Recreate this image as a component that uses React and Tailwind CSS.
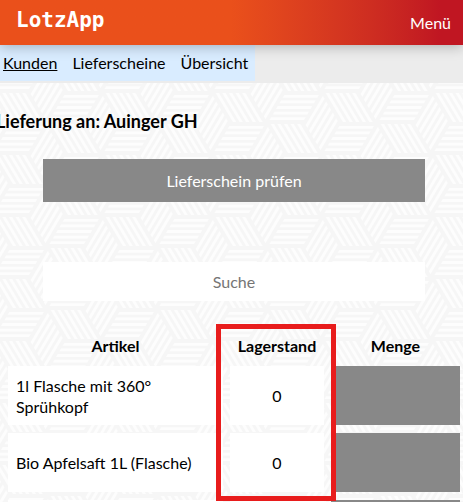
import React, { useState } from "react";

const articles = [
  { id: 1, name: "1l Flasche mit 360° Sprühkopf", stock: 0 },
  { id: 2, name: "Bio Apfelsaft 1L (Flasche)", stock: 0 },
  { id: 3, name: "", stock: "" },
];

const navLinks = [
  { label: "Kunden", active: true },
  { label: "Lieferscheine", active: false },
  { label: "Übersicht", active: false },
];

// The weave is made of hexagons, each split into three striped rhombi
const SIDES = [
  [36.67, 0],
  [-18.33, 31],
  [-18.33, -31],
];
const STRIPES = [0.14, 0.32, 0.5, 0.68, 0.86];

const hexagon = (cx, cy) =>
  SIDES.map(([ux, uy], i) => {
    const [vx, vy] = SIDES[(i + 1) % 3];
    const point = (a, b) =>
      `${(cx + ux * a + vx * b).toFixed(2)} ${(cy + uy * a + vy * b).toFixed(2)}`;
    return STRIPES.map(
      (t) =>
        `M${point(0.03, t - 0.045)}L${point(0.97, t - 0.045)}L${point(0.97, t + 0.045)}L${point(0.03, t + 0.045)}Z`
    ).join("");
  }).join("");

const CENTERS = [[0, 0], [110, 0], [0, 62], [110, 62], [55, 31]];

const Backdrop = () => (
  <svg className="absolute inset-0 -z-10 h-full w-full" aria-hidden="true">
    <defs>
      <pattern
        id="weave"
        width="110"
        height="62"
        patternUnits="userSpaceOnUse"
        patternTransform="translate(65 216)"
      >
        <path d={CENTERS.map(([x, y]) => hexagon(x, y)).join("")} fill="#fdfdfd" />
      </pattern>
    </defs>
    <rect width="100%" height="100%" fill="#f6f6f6" />
    <rect width="100%" height="100%" fill="url(#weave)" />
  </svg>
);

const App = () => {
  const [search, setSearch] = useState("");

  return (
    <div className="relative isolate h-screen overflow-hidden font-['Lato',sans-serif] text-base text-black">
      <Backdrop />

      <header className="relative flex h-[45px] items-center justify-between bg-linear-to-r from-[#ea501b] from-50% to-[#c01622] to-95% pr-3 pl-4 text-white shadow-[0_2px_12px_rgba(0,0,0,0.25)]">
        <a href="#" className="pb-1 font-['DejaVu_Sans_Mono',monospace] text-[21px] font-bold">
          LotzApp
        </a>
        <button type="button">Menü</button>
      </header>

      <nav className="flex h-[38px] bg-[#ececec]">
        <div className="flex h-9 items-center gap-[15px] bg-[#d9ecff] pr-[7px] pl-[3px]">
          {navLinks.map((link) => (
            <a key={link.label} href="#" className={link.active ? "underline" : ""}>
              {link.label}
            </a>
          ))}
        </div>
      </nav>

      <h1 className="-ml-1 pt-6 text-lg font-bold">Lieferung an: Auinger GH</h1>

      <div className="pt-6 pr-[38px] pl-[43px]">
        <button type="button" className="h-[43px] w-full bg-[#888888] text-white">
          Lieferschein prüfen
        </button>
        <input
          type="text"
          aria-label="Suche"
          placeholder="Suche"
          value={search}
          onChange={(e) => setSearch(e.target.value)}
          className="mt-[60px] h-[39px] w-full bg-white text-center placeholder:text-[#757575]"
        />
      </div>

      <div className="relative mt-6 -mr-1 pl-px">
        <table className="w-full table-fixed border-separate border-spacing-x-[7px] border-spacing-y-2 leading-[21px]">
          <colgroup>
            <col />
            <col className="w-[94px]" />
            <col className="w-[129px]" />
          </colgroup>
          <thead>
            <tr className="h-[25px]">
              <th>Artikel</th>
              <th>Lagerstand</th>
              <th>Menge</th>
            </tr>
          </thead>
          <tbody>
            {articles.map((article) => (
              <tr key={article.id} className="h-[59px]">
                <td className="bg-white px-2">{article.name}</td>
                <td className="bg-white text-center">{article.stock}</td>
                <td className="bg-[#888888]" />
              </tr>
            ))}
          </tbody>
        </table>

        {/* Marks the stock column */}
        <div className="pointer-events-none absolute -top-px right-[131px] h-[177px] w-[120px] border-[5px] border-[#e81c1c]" />
      </div>
    </div>
  );
};

export default App;
